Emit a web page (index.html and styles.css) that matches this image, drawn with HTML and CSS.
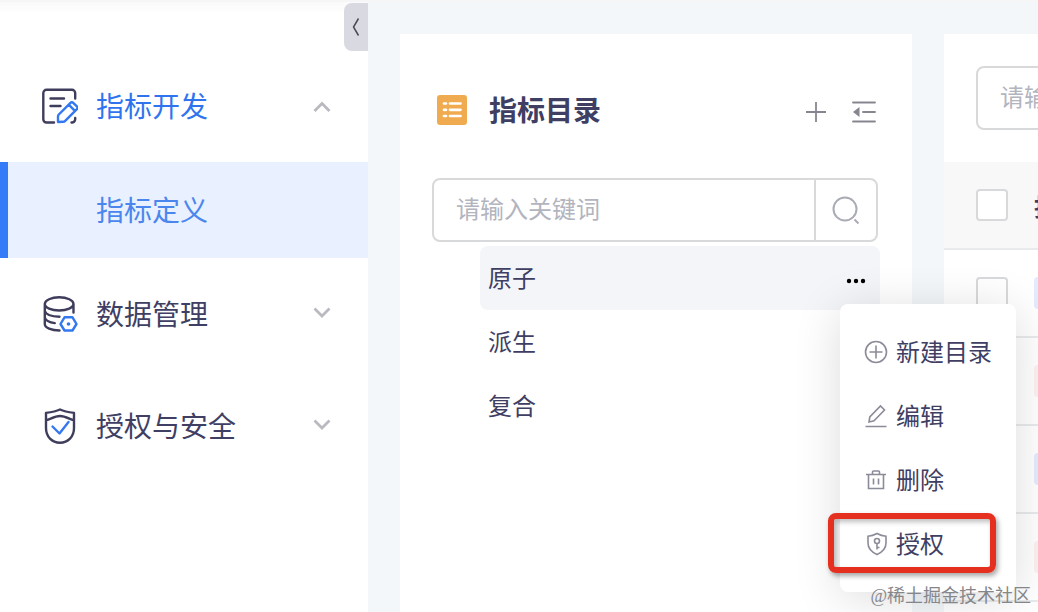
FILE: index.html
```html
<!DOCTYPE html>
<html lang="zh-CN">
<head>
<meta charset="utf-8">
<meta name="viewport" content="width=device-width, initial-scale=1">
<title>指标定义</title>
<link rel="stylesheet" href="styles.css">
</head>
<body>
<div class="topbar"></div>
<div class="app">
  <aside class="sidebar">
    <button class="collapse" type="button" aria-label="收起菜单">
      <svg width="10" height="20" viewBox="0 0 10 20"><path d="M7.5 1.5 2.5 10l5 8.5" fill="none" stroke="#4a4b55" stroke-width="1.5"/></svg>
    </button>
    <nav class="nav">
      <button class="nav-item nav-open" type="button" aria-expanded="true">
        <svg class="nav-icon" viewBox="0 0 36 36" fill="none" stroke-width="2.4" stroke-linecap="round" stroke-linejoin="round">
          <path d="M12 34.500H4.500A3.200 3.200 0 0 1 1.300 31.300V5A3.200 3.200 0 0 1 4.500 1.800H30A3.200 3.200 0 0 1 33.200 5V10.500M33.200 30V31.300A3.200 3.200 0 0 1 29.500 34.500M8.500 10.500H22M8.500 18H18.500" stroke="#3f3d5c"/>
          <path d="M16 34v-5.500c0-.8.3-1.400.8-2L28.500 14.800c.8-.8 1.900-.8 2.700 0l3.700 3.600c.8.8.8 1.900 0 2.700L23.200 32.900c-.6.600-1.200.9-2 .9zM26.700 16.700l6.200 6.200" stroke="#3478f0"/>
        </svg>
        <span class="nav-label">指标开发</span>
        <svg class="chevron" viewBox="0 0 18 14"><path d="M1.500 12 9 4.500l7.500 7.500"/></svg>
      </button>
      <a class="nav-sub" href="#define" aria-current="page">指标定义</a>
      <button class="nav-item" type="button" aria-expanded="false">
        <svg class="nav-icon" viewBox="0 0 36 36" fill="none" stroke-width="2.400" stroke-linecap="round" stroke-linejoin="round">
          <path d="M31.500 8c0 3.700-6.500 6.500-14.300 6.500S2.800 11.700 2.800 8 9.300 1.300 17.200 1.300 31.500 4.300 31.500 8zM31.500 8v8.500M2.800 8v20c0 3.800 6.500 6.500 14.700 6.500M2.800 15c1 3.500 6.200 5.500 14.700 5.800M2.800 21.500c.9 3.200 4.500 5 10 5.600" stroke="#3f3d5c"/>
          <path d="M22.500 21.300h8l4 6.700-4 6.500h-8L18.500 28z" stroke="#3478f0"/>
          <circle cx="26.500" cy="28" r="1.800" fill="#3478f0"/>
        </svg>
        <span class="nav-label">数据管理</span>
        <svg class="chevron" viewBox="0 0 18 14"><path d="M1.500 1.500 9 9l7.500-7.500"/></svg>
      </button>
      <button class="nav-item" type="button" aria-expanded="false">
        <svg class="nav-icon" viewBox="0 0 36 36" fill="none" stroke-width="2.400" stroke-linecap="round" stroke-linejoin="round">
          <path d="M18 1.500c4 1.900 8.500 2.700 14 3.400V20c0 8.800-6 14.700-14 14.700S4 28.800 4 20V4.900C9.500 4.200 14 3.400 18 1.500zM4.500 12.200C8.500 11 13 8 18 8s9.500 3 13.500 4.200" stroke="#3f3d5c"/>
          <path d="m10.500 18.500 7 7 9-11.500" stroke="#3478f0"/>
        </svg>
        <span class="nav-label">授权与安全</span>
        <svg class="chevron" viewBox="0 0 18 14"><path d="M1.500 1.500 9 9l7.500-7.500"/></svg>
      </button>
    </nav>
  </aside>

  <main class="main">
    <section class="catalog">
      <header class="catalog-head">
        <svg class="catalog-icon" viewBox="0 0 30 30"><rect width="30" height="30" rx="3" fill="#f0aa4f"/><path d="M7 8.500h2M7 14.800h2M7 21h2M13 8.500h10.500M13 14.800h10.500M13 21h10.500" stroke="#fff" stroke-width="2.700" stroke-linecap="round"/></svg>
        <h1 class="catalog-title">指标目录</h1>
        <button class="tool" type="button" aria-label="新增">
          <svg width="24" height="24" viewBox="0 0 24 24"><path d="M12 2v20M2 12h20" stroke="#85868f" stroke-width="1.800"/></svg>
        </button>
        <button class="tool" type="button" aria-label="收起目录">
          <svg width="24" height="24" viewBox="0 0 24 24"><path d="M1 2.500h22M11 12h12M1 21.500h22" stroke="#85868f" stroke-width="1.800" stroke-linecap="round"/><path d="M1 12l6.500-5v10z" fill="#85868f"/></svg>
        </button>
      </header>

      <form class="search">
        <input class="search-input" type="text" placeholder="请输入关键词" aria-label="请输入关键词">
        <button class="search-btn" type="button" aria-label="搜索">
          <svg width="28" height="28" viewBox="0 0 28 28" fill="none" stroke="#a9abb5" stroke-width="2"><circle cx="13" cy="13" r="11.500"/><path d="m22.500 23.500 4 4"/></svg>
        </button>
      </form>

      <ul class="tree">
        <li class="tree-row tree-active">
          <span class="tree-label">原子</span>
          <button class="more" type="button" aria-label="更多">
            <svg width="20" height="6" viewBox="0 0 20 6"><circle cx="3" cy="3" r="2.200"/><circle cx="10" cy="3" r="2.200"/><circle cx="17" cy="3" r="2.200"/></svg>
          </button>
          <div class="menu">
            <button class="menu-item" type="button">
              <svg class="menu-icon" viewBox="0 0 24 24"><circle cx="12" cy="12" r="10.500"/><path d="M12 5.500v13M5.500 12h13"/></svg>
              <span class="menu-label">新建目录</span>
            </button>
            <button class="menu-item" type="button">
              <svg class="menu-icon" viewBox="0 0 24 24"><path d="M1.500 22.500h21M5 18l.8-5L16.500 2l4 4L10 16.800z"/></svg>
              <span class="menu-label">编辑</span>
            </button>
            <button class="menu-item" type="button">
              <svg class="menu-icon" viewBox="0 0 24 24"><path d="M2 6.500h20M4.500 6.500v14h15v-14M8.500 6V4c0-.7.400-1 1-1h5c.6 0 1 .3 1 1v2M9.500 10.500v6M14.500 10.500v6"/></svg>
              <span class="menu-label">删除</span>
            </button>
            <button class="menu-item menu-marked" type="button">
              <svg class="menu-icon" viewBox="0 0 24 24"><path d="M13 1.500c2.700 1.500 5.600 2.500 9 2.800V11c0 5.500-3.500 9-9 11.500C7.500 20 4 16.500 4 11V4.300c3.400-.3 6.300-1.300 9-2.800z"/><circle cx="13" cy="9" r="2.500"/><path d="M13 11.500v6M13 15.500h2.500"/></svg>
              <span class="menu-label">授权</span>
            </button>
          </div>
        </li>
        <li class="tree-row"><span class="tree-label">派生</span></li>
        <li class="tree-row"><span class="tree-label">复合</span></li>
      </ul>
    </section>

    <section class="list">
      <div class="list-filter">
        <input class="list-input" type="text" placeholder="请输入关键词" aria-label="筛选关键词">
      </div>
      <table class="table">
        <thead>
          <tr><th class="col-check"><input class="check" type="checkbox" aria-label="全选"></th><th>指标</th></tr>
        </thead>
        <tbody>
          <tr><td class="col-check"><input class="check" type="checkbox" aria-label="选择第1行"></td><td><span class="tag tag-blue"></span></td></tr>
          <tr><td class="col-check"><input class="check" type="checkbox" aria-label="选择第2行"></td><td><span class="tag tag-red"></span></td></tr>
          <tr><td class="col-check"><input class="check" type="checkbox" aria-label="选择第3行"></td><td><span class="tag tag-blue"></span></td></tr>
          <tr><td class="col-check"><input class="check" type="checkbox" aria-label="选择第4行"></td><td><span class="tag tag-red"></span></td></tr>
        </tbody>
      </table>
    </section>
  </main>
</div>
<div class="watermark">@稀土掘金技术社区</div>
</body>
</html>
```

FILE: styles.css
```css
* {
  box-sizing: border-box;
}

body {
  margin: 0;
  height: 100vh;
  display: flex;
  flex-direction: column;
  overflow: hidden;
  position: relative;
  font-family: "Liberation Sans", "Noto Sans CJK SC", sans-serif;
  font-size: 24px;
  color: #3f3e63;
  background: #f3f7fa;
}

button,
input {
  font: inherit;
  color: inherit;
}

button {
  padding: 0;
  border: 0;
  background: none;
  cursor: pointer;
}

.topbar {
  flex: none;
  height: 2px;
  background: #f6f6f6;
}

.app {
  flex: 1;
  min-height: 0;
  display: flex;
}

.sidebar {
  flex: none;
  width: 368px;
  padding-top: 48px;
  position: relative;
  background: linear-gradient(#fafafa, #fff 12px);
}

.collapse {
  position: absolute;
  top: 1px;
  right: 0;
  width: 24px;
  height: 48px;
  display: flex;
  align-items: center;
  justify-content: center;
  border-radius: 8px 0 0 8px;
  background: #d9dae1;
}

.nav {
  display: flex;
  flex-direction: column;
  font-size: 28px;
}

.nav-item {
  height: 112px;
  padding: 0 37px 0 42px;
  display: flex;
  align-items: center;
  gap: 18px;
  text-align: left;
}

.nav-open {
  color: #2f74ee;
}

.nav-icon {
  width: 36px;
  height: 36px;
}

.nav-label {
  flex: 1;
  padding-bottom: 2px;
}

.chevron {
  width: 18px;
  height: 14px;
  fill: none;
  stroke: #b9babf;
  stroke-width: 2.8;
}

.nav-sub {
  height: 96px;
  padding: 0 0 2px 88px;
  display: flex;
  align-items: center;
  border-left: 8px solid #347bf8;
  color: #4a86ee;
  background: #e9f0ff;
  text-decoration: none;
}

.main {
  flex: 1;
  min-width: 0;
  padding: 32px 0 0 32px;
  display: flex;
  gap: 32px;
}

.catalog {
  flex: none;
  width: 512px;
  padding: 44px 32px 0;
  background: #fff;
}

.catalog-head {
  height: 64px;
  padding-left: 5px;
  display: flex;
  align-items: center;
  gap: 24px;
}

.catalog-icon {
  width: 30px;
  height: 30px;
}

.catalog-title {
  flex: 1;
  margin: 0 0 0 -2px;
  padding-top: 4px;
  font-size: 28px;
  line-height: 40px;
  font-weight: 600;
}

.tool {
  height: 28px;
  padding-top: 4px;
  display: flex;
}

.tool:last-child {
  margin-right: 4px;
}

.search {
  height: 64px;
  margin: 36px 2px 4px 0;
  display: flex;
  border: 2px solid #d8d9db;
  border-radius: 8px;
}

.search-input {
  flex: 1;
  min-width: 0;
  padding: 0 22px;
  border: 0;
  outline: 0;
  background: none;
}

.search-input::placeholder,
.list-input::placeholder {
  color: #b2b4be;
  opacity: 1;
}

.search-btn {
  width: 62px;
  display: flex;
  align-items: center;
  justify-content: center;
  border-left: 2px solid #d8d9db;
}

.tree {
  margin: 0;
  padding: 0 0 0 48px;
  list-style: none;
}

.tree-row {
  height: 64px;
  padding: 0 14px 0 8px;
  display: flex;
  align-items: center;
  justify-content: space-between;
  position: relative;
  border-radius: 8px;
}

.tree-label,
.menu-label {
  padding-bottom: 3px;
}

.tree-active {
  z-index: 2;
  background: #f4f5f8;
}

.more {
  padding-top: 6px;
  display: flex;
}

.menu {
  position: absolute;
  top: 58px;
  right: -136px;
  width: 176px;
  padding: 16px 0;
  border-radius: 8px;
  background: #fff;
  box-shadow: 0 6px 48px rgba(0, 0, 0, 0.14);
}

.menu-item {
  width: 100%;
  height: 64px;
  padding-left: 24px;
  display: flex;
  align-items: center;
  gap: 8px;
  position: relative;
}

.menu-icon {
  width: 24px;
  height: 24px;
  fill: none;
  stroke: #8b8c99;
  stroke-width: 1.6;
}

.menu-marked::after {
  content: "";
  position: absolute;
  inset: 1px 20px 3px -12px;
  border: 6px solid #e5301f;
  border-radius: 8px;
  box-shadow: 2px 3px 5px rgba(0, 0, 0, 0.35), inset 2px 3px 5px rgba(0, 0, 0, 0.25);
}

.list {
  flex: 1;
  min-width: 0;
  overflow: hidden;
  background: #fff;
}

.list-filter {
  padding: 32px 0 32px 32px;
}

.list-input {
  display: block;
  width: 480px;
  height: 64px;
  padding: 0 22px;
  border: 2px solid #d8d9db;
  border-radius: 8px;
}

.table {
  width: 640px;
  table-layout: fixed;
  border-collapse: separate;
  border-spacing: 0;
}

.table th,
.table td {
  height: 88px;
  padding: 0;
  text-align: left;
  border-bottom: 2px solid #e9eaec;
}

.table th {
  font-weight: 600;
  background: #f8f8f9;
}

.table .col-check {
  width: 90px;
  padding-left: 32px;
}

.check {
  appearance: none;
  display: block;
  width: 32px;
  height: 32px;
  margin: 0;
  border: 2px solid #d8d9db;
  border-radius: 4px;
  background: #fff;
}

.tag {
  display: block;
  width: 96px;
  height: 32px;
  border-radius: 4px;
}

.tag-blue {
  background: #e3ebfd;
}

.tag-red {
  background: #fdf0f0;
}

.watermark {
  position: absolute;
  right: 7px;
  bottom: 4px;
  z-index: 3;
  font-family: "Liberation Serif", "Noto Sans CJK SC", serif;
  font-size: 18px;
  line-height: 24px;
  color: #85868a;
}
```
